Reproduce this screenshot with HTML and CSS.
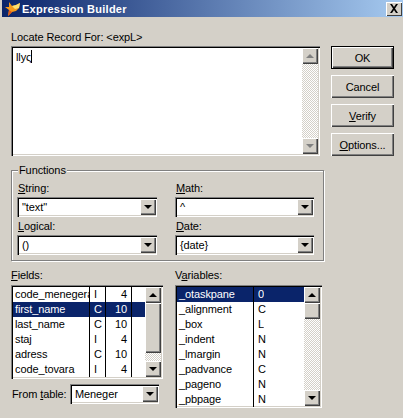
FILE: index.html
```html
<!DOCTYPE html>
<html lang="en">

<head>
    <meta charset="UTF-8">
    <meta name="viewport" content="width=device-width, initial-scale=1.0">
    <title>Expression Builder</title>
    <link rel="stylesheet" href="styles.css">
</head>

<body>
    <div class="title-bar">
        <svg class="fox-icon" width="16" height="16" viewBox="0 0 16 16">
            <path d="M4 1 L7 5 L11 4 L15 2 L14 7 L11 10 L7 11 L3 15 L4 9 L0 6 L4 6 Z" fill="#f59a1c"/>
            <path d="M7 5 L11 4 L15 2 L14 7 L10 8 Z" fill="#fde070"/>
            <path d="M3 15 L4 9 L7 11 Z" fill="#e0561a"/>
        </svg>
        <span class="title-text">Expression Builder</span>
        <button class="close-btn">
            <svg width="10" height="9" viewBox="0 0 10 9">
                <path d="M1 0 L3 0 L5 3 L7 0 L9 0 L6 4.5 L9 9 L7 9 L5 6 L3 9 L1 9 L4 4.5 Z" fill="#000"/>
            </svg>
        </button>
    </div>

    <div class="dialog">
        <div class="top-row">
            <div class="expr-section">
                <div class="label">Locate Record For: &lt;expL&gt;</div>
                <div class="expr-box sunken">
                    <div class="expr-text">llyς<span class="caret"></span></div>
                    <div class="scrollbar">
                        <button class="arrow-btn"><span class="tri-up disabled"></span></button>
                        <div class="track"></div>
                        <button class="arrow-btn"><span class="tri-down disabled"></span></button>
                    </div>
                </div>
            </div>
            <div class="button-col">
                <button class="btn default-btn">OK</button>
                <button class="btn">Cancel</button>
                <button class="btn"><u>V</u>erify</button>
                <button class="btn"><u>O</u>ptions...</button>
            </div>
        </div>

        <fieldset class="functions">
            <legend>Functions</legend>
            <div class="func-grid">
                <div class="func-item">
                    <div class="label"><u>S</u>tring:</div>
                    <div class="combo sunken"><span class="combo-value">"text"</span><button class="arrow-btn"><span class="tri-down"></span></button></div>
                </div>
                <div class="func-item">
                    <div class="label"><u>M</u>ath:</div>
                    <div class="combo sunken"><span class="combo-value">^</span><button class="arrow-btn"><span class="tri-down"></span></button></div>
                </div>
                <div class="func-item">
                    <div class="label"><u>L</u>ogical:</div>
                    <div class="combo sunken"><span class="combo-value">()</span><button class="arrow-btn"><span class="tri-down"></span></button></div>
                </div>
                <div class="func-item">
                    <div class="label"><u>D</u>ate:</div>
                    <div class="combo sunken"><span class="combo-value">{date}</span><button class="arrow-btn"><span class="tri-down"></span></button></div>
                </div>
            </div>
        </fieldset>

        <div class="bottom-row">
            <div class="fields-col">
                <div class="label"><u>F</u>ields:</div>
                <div class="list sunken fields-list">
                    <div class="rows">
                        <div class="row"><span class="c-name">code_menegera</span><span class="c-type">I</span><span class="c-size">4</span></div>
                        <div class="row selected"><span class="c-name">first_name</span><span class="c-type">C</span><span class="c-size">10</span></div>
                        <div class="row"><span class="c-name">last_name</span><span class="c-type">C</span><span class="c-size">10</span></div>
                        <div class="row"><span class="c-name">staj</span><span class="c-type">I</span><span class="c-size">4</span></div>
                        <div class="row"><span class="c-name">adress</span><span class="c-type">C</span><span class="c-size">10</span></div>
                        <div class="row"><span class="c-name">code_tovara</span><span class="c-type">I</span><span class="c-size">4</span></div>
                    </div>
                    <div class="scrollbar">
                        <button class="arrow-btn"><span class="tri-up"></span></button>
                        <button class="thumb fields-thumb"></button>
                        <div class="track"></div>
                        <button class="arrow-btn"><span class="tri-down"></span></button>
                    </div>
                </div>
                <div class="from-table">
                    <span class="from-label">From <u>t</u>able:</span>
                    <div class="combo sunken table-combo"><span class="combo-value">Meneger</span><button class="arrow-btn"><span class="tri-down"></span></button></div>
                </div>
            </div>
            <div class="vars-col">
                <div class="label">V<u>a</u>riables:</div>
                <div class="list sunken vars-list">
                    <div class="rows">
                        <div class="row selected"><span class="v-name">_otaskpane</span><span class="v-type">0</span></div>
                        <div class="row"><span class="v-name">_alignment</span><span class="v-type">C</span></div>
                        <div class="row"><span class="v-name">_box</span><span class="v-type">L</span></div>
                        <div class="row"><span class="v-name">_indent</span><span class="v-type">N</span></div>
                        <div class="row"><span class="v-name">_lmargin</span><span class="v-type">N</span></div>
                        <div class="row"><span class="v-name">_padvance</span><span class="v-type">C</span></div>
                        <div class="row"><span class="v-name">_pageno</span><span class="v-type">N</span></div>
                        <div class="row"><span class="v-name">_pbpage</span><span class="v-type">N</span></div>
                    </div>
                    <div class="scrollbar">
                        <button class="arrow-btn"><span class="tri-up"></span></button>
                        <button class="thumb"></button>
                        <div class="track"></div>
                        <button class="arrow-btn"><span class="tri-down"></span></button>
                    </div>
                </div>
            </div>
        </div>
    </div>
</body>

</html>
```

FILE: styles.css
```css
:root {
    --face: #d4d0c8;
    --shade: #808080;
    --dark: #404040;
    --select: #0a246a;
}

* {
    box-sizing: border-box;
    margin: 0;
    padding: 0;
}

body {
    font-family: 'Liberation Sans', Arial, sans-serif;
    font-size: 11px;
    letter-spacing: -0.1px;
    line-height: 14px;
    color: #000;
    background-color: var(--face);
    height: 418px;
    overflow: hidden;
}

button {
    font: inherit;
    letter-spacing: inherit;
    color: #000;
    border: none;
    background-color: var(--face);
}

/* title bar */
.title-bar {
    display: flex;
    align-items: center;
    height: 17px;
    margin-left: 2px;
    padding-right: 1px;
    background: linear-gradient(to right, #0a246a, #a6caf0);
}

.fox-icon {
    flex: none;
    margin-left: 3px;
}

.title-text {
    flex-grow: 1;
    margin-left: 1px;
    font-size: 11px;
    font-weight: bold;
    letter-spacing: 0.25px;
    color: #fff;
}

.close-btn {
    display: flex;
    align-items: center;
    justify-content: center;
    width: 16px;
    height: 14px;
    box-shadow: inset 1px 1px 0 #fff, inset -1px -1px 0 var(--dark);
}

/* shared bevels */
.sunken {
    background-color: #fff;
    box-shadow: inset 1px 1px 0 var(--shade), inset 2px 2px 0 #000, inset -1px -1px 0 #fff, inset -2px -2px 0 var(--face);
    padding: 2px;
}

.label {
    height: 14px;
    margin-bottom: 2px;
}

/* expression + buttons */
.dialog {
    padding: 13px 0 0 11px;
}

.top-row {
    display: flex;
}

.expr-section {
    width: 309px;
}

.expr-box {
    display: flex;
    height: 110px;
}

.expr-text {
    flex-grow: 1;
    padding: 2px 3px;
}

.caret {
    display: inline-block;
    width: 1px;
    height: 13px;
    background-color: #000;
    vertical-align: top;
}

.scrollbar {
    display: flex;
    flex-direction: column;
    width: 16px;
    flex: none;
}

.track {
    flex-grow: 1;
    background-image: conic-gradient(#fff 25%, var(--face) 0 50%, #fff 0 75%, var(--face) 0);
    background-size: 2px 2px;
}

.arrow-btn {
    display: flex;
    flex: none;
    align-items: center;
    justify-content: center;
    width: 16px;
    height: 16px;
    box-shadow: inset 1px 1px 0 #fff, inset -1px -1px 0 var(--dark), inset -2px -2px 0 var(--shade);
}

.thumb {
    flex: none;
    height: 16px;
    box-shadow: inset 1px 1px 0 #fff, inset -1px -1px 0 var(--dark), inset -2px -2px 0 var(--shade);
}

.fields-thumb {
    height: 50px;
}

.tri-down,
.tri-up {
    width: 0;
    height: 0;
    border-left: 4px solid transparent;
    border-right: 4px solid transparent;
}

.tri-down {
    border-top: 4px solid #000;
}

.tri-up {
    border-bottom: 4px solid #000;
}

.tri-down.disabled {
    border-top-color: var(--shade);
}

.tri-up.disabled {
    border-bottom-color: var(--shade);
}

.button-col {
    display: flex;
    flex-direction: column;
    gap: 6px;
    margin: 16px 0 0 11px;
}

.btn {
    width: 63px;
    height: 23px;
    box-shadow: inset 1px 1px 0 #fff, inset -1px -1px 0 var(--dark), inset -2px -2px 0 var(--shade);
}

.default-btn {
    box-shadow: inset 0 0 0 1px #000, inset 2px 2px 0 #fff, inset -2px -2px 0 var(--dark), inset -3px -3px 0 var(--shade);
}

/* functions group */
.functions {
    width: 312px;
    height: 98px;
    margin-top: 7px;
    padding: 4px 9px 0 5px;
    border: 1px solid var(--shade);
    box-shadow: 1px 1px 0 #fff, inset 1px 1px 0 #fff;
}

.functions legend {
    margin-left: 1px;
    padding: 0 1px;
    background-color: var(--face);
}

.func-grid {
    display: grid;
    grid-template-columns: 140px 139px;
    column-gap: 18px;
    row-gap: 2px;
}

.func-item .label {
    padding-left: 1px;
}

.combo {
    display: flex;
    align-items: center;
    height: 20px;
    padding-right: 1px;
}

.combo-value {
    flex-grow: 1;
    padding-left: 3px;
}

/* field and variable lists */
.bottom-row {
    display: flex;
    margin-top: 7px;
}

.fields-col {
    width: 164px;
}

.vars-col {
    width: 147px;
}

.list {
    display: flex;
    margin-top: 3px;
}

.fields-list {
    width: 152px;
    height: 94px;
}

.vars-list {
    height: 123px;
}

.rows {
    flex-grow: 1;
    min-width: 0;
}

.row {
    display: flex;
    height: 15px;
    line-height: 15px;
}

.row.selected {
    color: #fff;
    background-color: var(--select);
}

.row span {
    white-space: nowrap;
    overflow: hidden;
}

.c-name {
    flex: none;
    width: 77px;
    padding-left: 2px;
    border-right: 1px solid #000;
}

.c-type {
    flex: none;
    width: 16px;
    padding-left: 4px;
    border-right: 1px solid #000;
}

.c-size {
    flex: none;
    width: 26px;
    padding-right: 4px;
    text-align: right;
    border-right: 1px solid #000;
}

.v-name {
    flex: none;
    width: 77px;
    padding-left: 2px;
    border-right: 1px solid #000;
}

.v-type {
    padding-left: 4px;
}

.from-table {
    display: flex;
    align-items: center;
    margin-top: 5px;
    padding-left: 1px;
}

.from-label {
    width: 58px;
    white-space: nowrap;
}

.table-combo {
    width: 89px;
}
```
